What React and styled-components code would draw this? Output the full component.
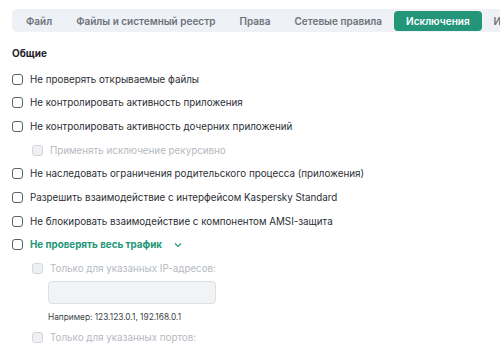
import styled, { createGlobalStyle } from 'styled-components';

const GlobalStyle = createGlobalStyle`
	body {
		margin: 0;
		background: #ffffff;
		font-family: Inter, "Noto Sans", sans-serif;
		color: #1f2329;
		overflow: hidden;
	}
`;

const tabs = ['Файл', 'Файлы и системный реестр', 'Права', 'Сетевые правила', 'Исключения', 'Исключения'];

function CheckRow({ label, sub, disabled, accent, chevron }) {
	return (
		<Row $sub={sub}>
			<Box $disabled={disabled} />
			<Label $disabled={disabled} $accent={accent}>
				{label}
			</Label>
			{chevron && (
				<svg width="10" height="10" viewBox="0 0 10 10">
					<path d="M2 3.5 L5 6.5 L8 3.5" fill="none" stroke="#23967a" strokeWidth="1.2" />
				</svg>
			)}
		</Row>
	);
}

function App() {
	return (
		<Page>
			<GlobalStyle />
			<TabBar>
				{tabs.map((t, i) => (
					<Tab key={i} $active={i === 4}>
						{t}
					</Tab>
				))}
			</TabBar>
			<Section>
				<Heading>Общие</Heading>
				<List>
					<CheckRow label="Не проверять открываемые файлы" />
					<CheckRow label="Не контролировать активность приложения" />
					<CheckRow label="Не контролировать активность дочерних приложений" />
					<CheckRow label="Применять исключение рекурсивно" sub disabled />
					<CheckRow label="Не наследовать ограничения родительского процесса (приложения)" />
					<CheckRow label="Разрешить взаимодействие с интерфейсом Kaspersky Standard" />
					<CheckRow label="Не блокировать взаимодействие с компонентом AMSI-защита" />
					<CheckRow label="Не проверять весь трафик" accent chevron />
					<CheckRow label="Только для указанных IP-адресов:" sub disabled />
					<Field>
						<Input />
						<Hint>Например: 123.123.0.1, 192.168.0.1</Hint>
					</Field>
					<CheckRow label="Только для указанных портов:" sub disabled />
				</List>
			</Section>
		</Page>
	);
}

export default App;

const Page = styled.div`
	width: 500px;
	height: 344px;
	overflow: hidden;
	padding: 9px 0 0 12px;
	box-sizing: border-box;
`;

const TabBar = styled.div`
	display: flex;
	align-items: center;
	height: 23px;
	padding: 0 2px;
	background: #eef1f5;
	border-radius: 5px 0 0 5px;
	white-space: nowrap;
	overflow: hidden;
`;

const Tab = styled.div`
	flex-shrink: 0;
	height: 20px;
	line-height: 20px;
	padding: 0 12px;
	border-radius: 4px;
	font-size: 10px;
	font-weight: 600;
	color: ${({ $active }) => ($active ? '#ffffff' : '#6d737c')};
	background: ${({ $active }) => ($active ? '#23967a' : 'transparent')};
`;

const Section = styled.div`
	padding-top: 15px;
`;

const Heading = styled.div`
	font-size: 10px;
	font-weight: 700;
	color: #1f2329;
	margin-bottom: 13px;
`;

const List = styled.div`
	display: flex;
	flex-direction: column;
	gap: 9.7px;
`;

const Row = styled.div`
	display: flex;
	align-items: center;
	gap: 7px;
	height: 14px;
	padding-left: ${({ $sub }) => ($sub ? '20px' : '0')};
`;

const Box = styled.div`
	width: 9px;
	height: 9px;
	flex-shrink: 0;
	border: 1.3px solid ${({ $disabled }) => ($disabled ? '#d3d7dc' : '#5a6068')};
	background: ${({ $disabled }) => ($disabled ? '#eef0f3' : '#ffffff')};
	border-radius: 3px;
`;

const Label = styled.span`
	font-size: 9.8px;
	font-weight: ${({ $accent }) => ($accent ? 700 : 400)};
	color: ${({ $disabled, $accent }) => ($disabled ? '#b5bac1' : $accent ? '#23967a' : '#2b2f35')};
	white-space: nowrap;
	margin-right: 4px;
`;

const Field = styled.div`
	display: flex;
	flex-direction: column;
	gap: 8px;
	padding-left: 36px;
	margin-top: -4px;
	margin-bottom: -1px;
`;

const Input = styled.div`
	width: 166px;
	height: 21px;
	background: #f1f3f5;
	border: 1px solid #dcdfe3;
	border-radius: 4px;
`;

const Hint = styled.div`
	font-size: 8.3px;
	color: #3a3f46;
`;
